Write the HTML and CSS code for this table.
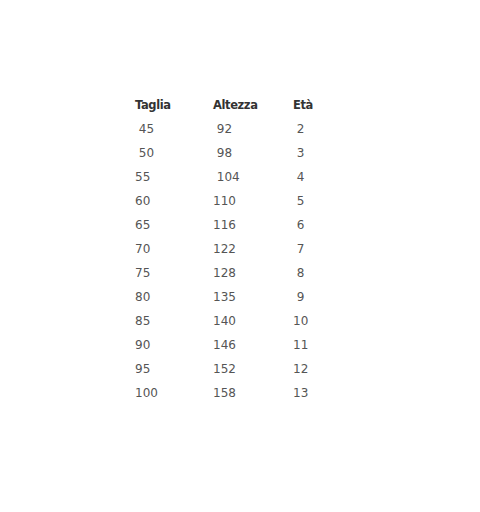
FILE: index.html
```html
<!DOCTYPE html>
<html>
<head>
<meta charset="utf-8">
<link rel="stylesheet" href="styles.css">
</head>
<body>
<div class="page">
<table class="sizes">
<thead>
<tr><th class="c1">Taglia</th><th class="c2">Altezza</th><th class="c3">Età</th></tr>
</thead>
<tbody>
<tr><td>&nbsp;45</td><td>&nbsp;92</td><td>&nbsp;2</td></tr>
<tr><td>&nbsp;50</td><td>&nbsp;98</td><td>&nbsp;3</td></tr>
<tr><td>55</td><td>&nbsp;104</td><td>&nbsp;4</td></tr>
<tr><td>60</td><td>110</td><td>&nbsp;5</td></tr>
<tr><td>65</td><td>116</td><td>&nbsp;6</td></tr>
<tr><td>70</td><td>122</td><td>&nbsp;7</td></tr>
<tr><td>75</td><td>128</td><td>&nbsp;8</td></tr>
<tr><td>80</td><td>135</td><td>&nbsp;9</td></tr>
<tr><td>85</td><td>140</td><td>10</td></tr>
<tr><td>90</td><td>146</td><td>11</td></tr>
<tr><td>95</td><td>152</td><td>12</td></tr>
<tr><td>100</td><td>158</td><td>13</td></tr>
</tbody>
</table>
</div>
</body>
</html>
```
FILE: styles.css
```css
html, body {
  margin: 0;
  padding: 0;
  background: #ffffff;
}
.page {
  padding: 93px 0 0 135px;
}
.sizes {
  border-collapse: collapse;
  font-family: "DejaVu Sans", Verdana, sans-serif;
  font-size: 12px;
  color: #555555;
}
.sizes th, .sizes td {
  padding: 0;
  height: 24px;
  line-height: 24px;
  text-align: left;
  vertical-align: middle;
  white-space: pre;
}
.sizes th {
  font-weight: bold;
  font-size: 11.5px;
  letter-spacing: -0.4px;
  color: #333333;
  height: 23px;
  line-height: 23px;
  padding-top: 1px;
}
.c1 { width: 78px; }
.c2 { width: 80px; }
.c3 { width: 40px; }
```
